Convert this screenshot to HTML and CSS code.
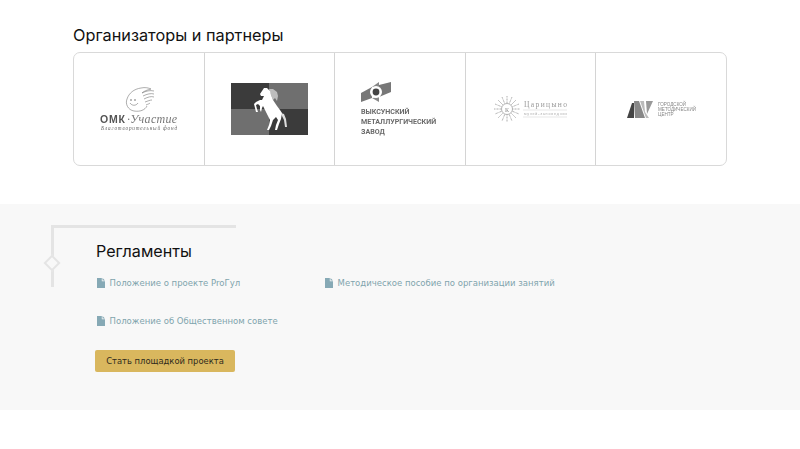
FILE: index.html
```html
<!DOCTYPE html>
<html lang="ru">
<head>
<meta charset="utf-8">
<title>Организаторы и партнеры</title>
<link rel="stylesheet" href="styles.css">
</head>
<body>
<svg class="defs" width="0" height="0" aria-hidden="true">
  <symbol id="doc" viewBox="0 0 8 10">
    <path d="M0 0H4.8V3.2H8V10H0Z M5.5 0L8 2.5H5.5Z"/>
  </symbol>
</svg>
<section class="partners">
  <h2 class="title">Организаторы и партнеры</h2>
  <div class="grid">
    <div class="cell">
      <svg class="logo" width="78" height="46" viewBox="0 0 78 46">
        <g fill="none" stroke="#777" stroke-width=".6">
          <path d="M27 13C29 7 34 3 41 2C45 1 49 2 51 3C47 4 44 5 42 7"/>
          <path d="M27 13C25 18 28 24 34 25C40 26 45 24 47 20"/>
          <path d="M42 7C46 5 50 4 54 5M43 10C47 8 51 7 54 8M44 13C48 11 51 10 54 11M45 16C48 15 50 14 52 14M46 19C48 18 49 18 50 17"/>
          <path d="M30 17C32 20 36 20 38 17"/>
        </g>
        <circle cx="31" cy="14" r=".8" fill="#666"/><circle cx="35" cy="14" r=".8" fill="#666"/>
        <text x="0" y="37" class="omk-a">ОМК</text>
        <text x="27" y="37" class="omk-b" textLength="50">·Участие</text>
        <text x="1" y="44" class="omk-c" textLength="76">Благотворительный фонд</text>
      </svg>
    </div>
    <div class="cell">
      <svg class="logo" width="77" height="52" viewBox="0 0 77 52">
        <rect width="77" height="52" fill="#6f6f6f"/>
        <rect width="38" height="26" fill="#3b3b3b"/>
        <rect x="38" y="26" width="39" height="26" fill="#3b3b3b"/>
        <path fill="#bdbdbd" d="M38 6L42 6L46 9L47 13L46 18L44 15L42 17L40 12Z"/>
        <path fill="#ddd" d="M50 30L53 31L55 36L56 44L54 44L53 37L51 33Z"/>
        <path fill="#fff" d="M33 5L36 5L39 8L40 12L42 17L46 23L49 27L51 30L50 36L48 41L46 47L44 47L45 42L47 37L45 34L42 37L40 43L38 47L36 47L38 42L39 37L37 33L34 27L32 23L31 25L30 29L29 27L29 23L27 21L25 22L26 26L27 29L25 29L24 25L23 21L25 19L29 17L31 17L33 13L30 13L29 11L31 8Z"/>
      </svg>
    </div>
    <div class="cell">
      <svg class="logo" width="78" height="54" viewBox="0 0 78 54">
        <path fill="#777" d="M0 11L11 5V16L0 20Z"/>
        <path fill="#777" d="M18 3L30 0V10L18 15Z"/>
        <path fill="#888" d="M11 5L18 0V5Z"/>
        <path fill="#888" d="M11 16L18 15V20Z"/>
        <circle cx="15" cy="10" r="6" fill="#fff"/><circle cx="15" cy="10" r="3.4" fill="#444"/>
        <text x="0" y="32" class="vmz">ВЫКСУНСКИЙ</text>
        <text x="0" y="42" class="vmz">МЕТАЛЛУРГИЧЕСКИЙ</text>
        <text x="0" y="52" class="vmz">ЗАВОД</text>
      </svg>
    </div>
    <div class="cell">
      <svg class="logo" width="74" height="26" viewBox="0 0 74 26">
        <g stroke="#999" stroke-width=".8" stroke-dasharray="1 .5">
          <path d="M13 0V26M0 13H26M4 4L22 22M22 4L4 22M8 1L18 25M18 1L8 25M1 8L25 18M25 8L1 18"/>
        </g>
        <circle cx="13" cy="13" r="5.5" fill="#fff" stroke="#999" stroke-width=".7"/>
        <text x="13" y="15.5" class="tsar-k">К</text>
        <text x="30" y="11" class="tsar-a" textLength="43">Царицыно</text>
        <path d="M29 14H73M29 21H73" stroke="#ccc" stroke-width=".5"/>
        <text x="30" y="19" class="tsar-b" textLength="43">музей-заповедник</text>
      </svg>
    </div>
    <div class="cell">
      <svg class="logo" width="69" height="18" viewBox="0 0 69 18">
        <path fill="#444" d="M0 18L5 3L7 3V18Z"/>
        <path fill="#888" d="M7 1H12L18 18H8Z"/>
        <path fill="#bbb" d="M13 1H17L18 12L22 18H19Z"/>
        <path fill="#999" d="M19 1H26L20 14Z"/>
        <text x="31" y="6" class="gmc">ГОРОДСКОЙ</text>
        <text x="31" y="11" class="gmc">МЕТОДИЧЕСКИЙ</text>
        <text x="31" y="16" class="gmc">ЦЕНТР</text>
      </svg>
    </div>
  </div>
</section>
<section class="rules">
  <div class="ornament" aria-hidden="true"><span class="diamond"></span></div>
  <h2 class="rules-title">Регламенты</h2>
  <ul class="docs">
    <li><a class="doc" href="#"><svg class="doc-icon"><use href="#doc"/></svg>Положение о проекте ProГул</a></li>
    <li><a class="doc" href="#"><svg class="doc-icon"><use href="#doc"/></svg>Методическое пособие по организации занятий</a></li>
    <li><a class="doc" href="#"><svg class="doc-icon"><use href="#doc"/></svg>Положение об Общественном совете</a></li>
  </ul>
  <a class="btn" href="#">Стать площадкой проекта</a>
</section>
</body>
</html>
```
FILE: styles.css
```css
* { box-sizing: border-box; }
html, body { margin: 0; padding: 0; }
body { background: #fff; font-family: "DejaVu Sans", sans-serif; height: 449px; overflow: hidden; }
.defs { position: absolute; }

.partners { padding: 25px 73px 38px; height: 204px; }
.title, .rules-title {
  margin: 0;
  font-family: Inter, Roboto, sans-serif;
  font-weight: 400;
  font-size: 16.3px;
  line-height: 20px;
  color: #111;
}
.title { margin-bottom: 7px; }
.grid {
  display: grid;
  grid-template-columns: 130px 130px 131px 130px 1fr;
  height: 114px;
  border: 1px solid #d9d9d9;
  border-radius: 7px;
}
.cell {
  display: flex;
  align-items: center;
  justify-content: center;
  border-left: 1px solid #d4d4d4;
}
.cell:first-child { border-left: 0; }
.logo { display: block; filter: blur(.25px); }
.omk-a { font: 700 10.5px "Liberation Sans", sans-serif; fill: #555; letter-spacing: .8px; }
.omk-b { font: italic 12px "Liberation Serif", serif; fill: #777; }
.omk-c { font: italic 5.2px "Liberation Serif", serif; fill: #666; }
.vmz { font: 700 7.1px Roboto, sans-serif; fill: #6a6a6a; }
.tsar-k { font: 6px "Liberation Serif", serif; fill: #888; text-anchor: middle; }
.tsar-a { font: 7.5px "Liberation Serif", serif; fill: #999; }
.tsar-b { font: 3.6px "Liberation Sans", sans-serif; fill: #aaa; }
.gmc { font: 4.6px "Liberation Sans", sans-serif; fill: #888; }

.rules {
  position: relative;
  height: 206px;
  padding: 37px 96px 0;
  background: #f8f8f8;
}
.rules-title { font-size: 16.1px; margin-bottom: 15px; }
.ornament {
  position: absolute;
  left: 51px;
  top: 21px;
  width: 185px;
  height: 62px;
  border-top: 3px solid #e4e4e4;
  border-left: 3px solid #e4e4e4;
}
.diamond {
  position: absolute;
  left: -8px;
  top: 29px;
  width: 12px;
  height: 12px;
  background: #f8f8f8;
  border: 2px solid #e4e4e4;
  transform: rotate(45deg);
}
.docs {
  display: grid;
  grid-template-columns: 228px 1fr;
  grid-auto-rows: 38px;
  margin: 0;
  padding: 0;
  list-style: none;
}
.doc {
  display: flex;
  align-items: center;
  height: 14px;
  padding-left: 1px;
  font-size: 8.5px;
  color: #7fa4ad;
  text-decoration: none;
  white-space: nowrap;
}
.doc-icon { width: 8px; height: 10px; margin-right: 4.6px; fill: #86a9b5; }
.btn {
  display: block;
  width: 140px;
  height: 22px;
  margin: -2px 0 0 -1px;
  border-radius: 2px;
  background: #d9b75e;
  color: #2e2a1c;
  font-size: 8.4px;
  line-height: 22px;
  text-align: center;
  text-decoration: none;
}
```
